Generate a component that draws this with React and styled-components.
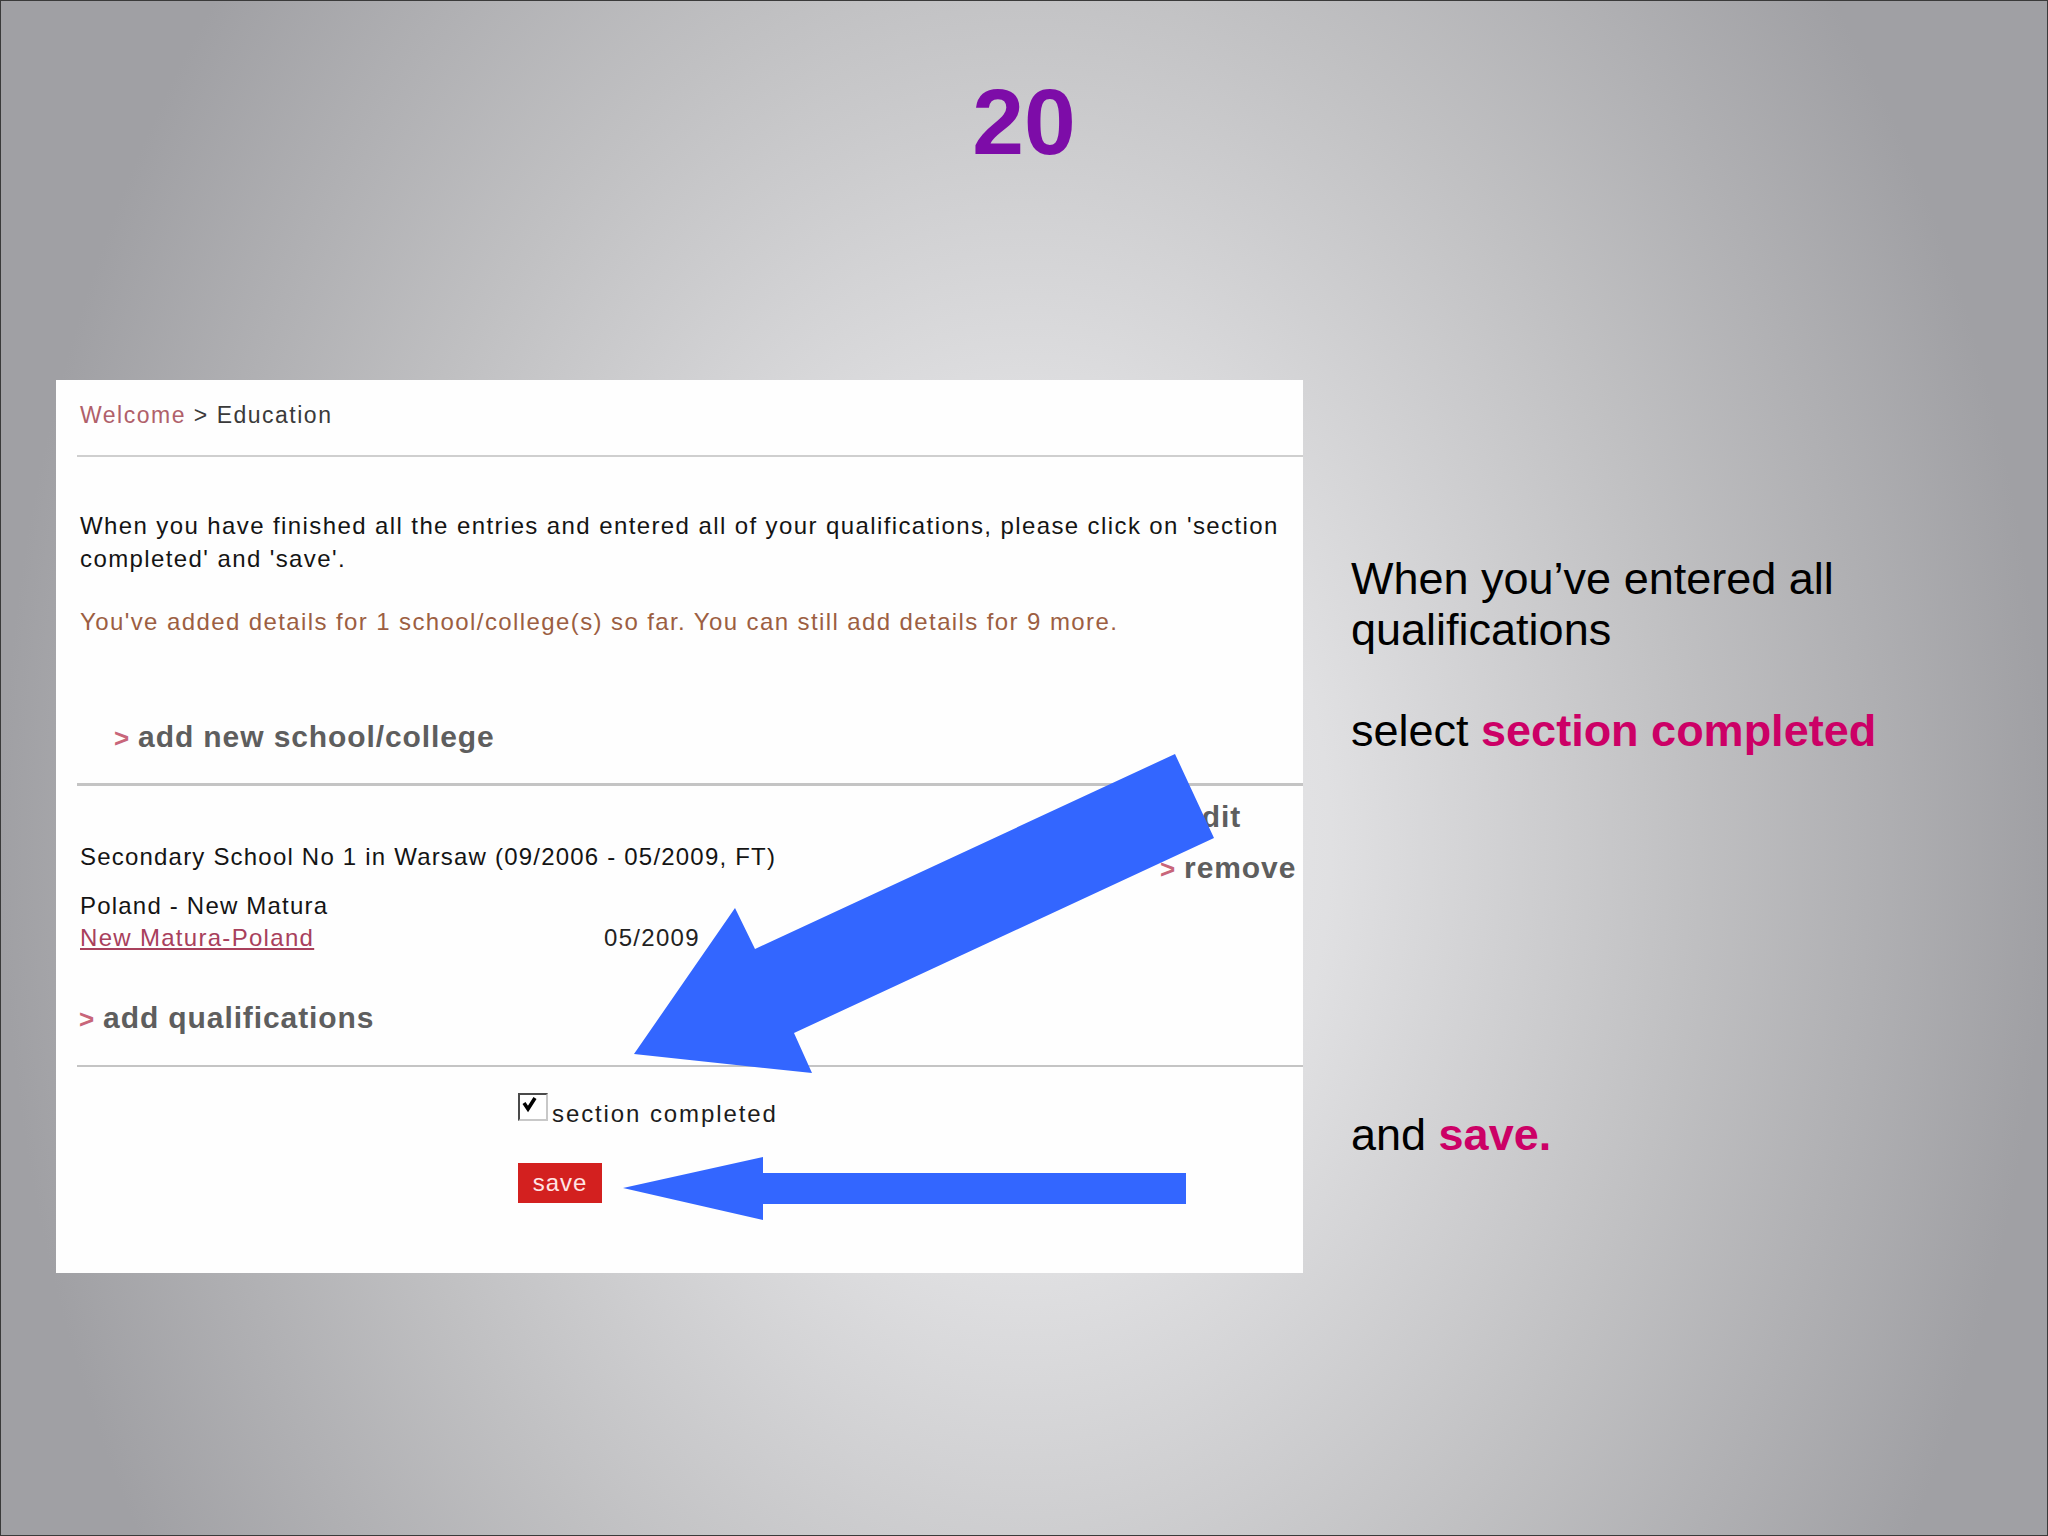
import React from 'react';
import styled, { createGlobalStyle } from 'styled-components';

const Global = createGlobalStyle`
  body {
    margin: 0;
    font-family: "Liberation Sans", Arial, sans-serif;
  }
`;

const Slide = styled.div`
  position: relative;
  box-sizing: border-box;
  width: 2048px;
  height: 1536px;
  overflow: hidden;
  border: 1px solid #3a3a3a;
  background: radial-gradient(ellipse 50% 90% at 50% 55%, #efeff1 0%, #e0e0e2 30%, #c0c0c2 65%, #a0a0a4 100%);
  background-color: #9c9ca0;
`;

const Title = styled.h1`
  margin: 75px 0 0;
  height: 93px;
  font-size: 93px;
  line-height: 93px;
  font-weight: bold;
  text-align: center;
  color: #7d0ca8;
`;

const Content = styled.div`
  display: flex;
  align-items: flex-start;
  margin-top: 211px;
  padding-left: 55px;
`;

const Panel = styled.div`
  box-sizing: border-box;
  width: 1247px;
  height: 893px;
  padding-left: 21px;
  background: #fefefe;
`;

const Breadcrumb = styled.div`
  box-sizing: border-box;
  height: 77px;
  padding: 22px 0 0 3px;
  line-height: 26px;
  font-size: 23px;
  letter-spacing: 1.5px;
  color: #3a3a3a;
  border-bottom: 2px solid #cfcfcf;
`;

const Crumb = styled.span`
  color: #b0606a;
`;

const Section = styled.div`
  padding: ${p => p.$pad || '0'};
  border-bottom: ${p => p.$line ? `${p.$line}px solid #c4c4c4` : 'none'};
`;

const Text = styled.p`
  margin: ${p => p.$mt || 0}px 0 0 3px;
  font-size: 24px;
  line-height: ${p => p.$lh || 33}px;
  letter-spacing: ${p => p.$ls ?? 1.4}px;
  color: ${p => p.$color || '#141414'};
`;

const LinkRow = styled.div`
  margin: ${p => p.$mt || 0}px 0 0 ${p => p.$ml || 0}px;
  font-size: 30px;
  line-height: 36px;
  font-weight: bold;
  letter-spacing: 0.9px;
  color: #5e5e5e;
  white-space: nowrap;
`;

const Chevron = styled.span`
  color: #c8667a;
  margin-right: 8px;
  font-size: 26px;
`;

const SchoolRow = styled.div`
  display: flex;
  align-items: flex-start;
`;

const Details = styled.div`
  flex: 1;
  padding-top: 56px;
`;

const QualRow = styled.div`
  display: grid;
  grid-template-columns: 527px auto;
  margin-top: 2px;
`;

const Cell = styled.span`
  font-size: 24px;
  line-height: 30px;
  letter-spacing: 1.3px;
  color: ${p => p.$link ? '#a8405c' : '#222'};
  text-decoration: ${p => p.$link ? 'underline' : 'none'};
  padding-left: ${p => p.$link ? 3 : 0}px;
`;

const Actions = styled.div`
  display: flex;
  flex-direction: column;
  gap: 14px;
  width: 143px;
  padding-top: 13px;
`;

const Completion = styled.div`
  padding: 26px 0 0 441px;
`;

const CheckRow = styled.label`
  display: flex;
  align-items: flex-start;
  gap: 4px;
`;

const CheckBox = styled.span`
  box-sizing: border-box;
  display: inline-flex;
  width: 30px;
  height: 28px;
  border: 2px solid;
  border-color: #4a4a4a #c8c8c8 #c8c8c8 #4a4a4a;
  background: #fff;
`;

const CheckLabel = styled.span`
  margin-top: 6px;
  font-size: 24px;
  line-height: 30px;
  letter-spacing: 1.9px;
  color: #1c1c1c;
`;

const SaveButton = styled.button`
  display: block;
  margin-top: 34px;
  width: 84px;
  height: 40px;
  padding: 0;
  border: none;
  background: #d3201f;
  color: #ffe4e4;
  font-family: "Liberation Sans", Arial, sans-serif;
  font-size: 24px;
  letter-spacing: 1px;
`;

const Side = styled.div`
  margin-left: 48px;
  padding-top: 173px;
  font-size: 45px;
  line-height: 51px;
  color: #000;
`;

const SideLine = styled.p`
  margin: ${p => p.$mt || 0}px 0 0;
`;

const Accent = styled.b`
  color: #cc0066;
`;

const Overlay = styled.svg`
  position: absolute;
  left: 0;
  top: 0;
  pointer-events: none;
`;

export default function App() {
  return (
    <Slide>
      <Global />
      <Title>20</Title>
      <Content>
        <Panel>
          <Breadcrumb>
            <Crumb>Welcome</Crumb> &gt; Education
          </Breadcrumb>

          <Section $line={3} $pad="0 0 27px">
            <Text $mt={52}>
              When you have finished all the entries and entered all of your qualifications, please click on 'section
              <br />
              completed' and 'save'.
            </Text>
            <Text $mt={30} $color="#9c5e42">
              You've added details for 1 school/college(s) so far. You can still add details for 9 more.
            </Text>
            <LinkRow $mt={81} $ml={37}>
              <Chevron>&gt;</Chevron>add new school/college
            </LinkRow>
          </Section>

          <Section $line={2} $pad="0 0 28px">
            <SchoolRow>
              <Details>
                <Text $lh={30} $ls={1.2}>Secondary School No 1 in Warsaw (09/2006 - 05/2009, FT)</Text>
                <Text $lh={30} $ls={1.2} $mt={19}>Poland - New Matura</Text>
                <QualRow>
                  <Cell $link>New Matura-Poland</Cell>
                  <Cell>05/2009</Cell>
                </QualRow>
                <LinkRow $mt={47} $ml={2}>
                  <Chevron>&gt;</Chevron>add qualifications
                </LinkRow>
              </Details>
              <Actions>
                <LinkRow>
                  <Chevron>&gt;</Chevron>edit
                </LinkRow>
                <LinkRow>
                  <Chevron>&gt;</Chevron>remove
                </LinkRow>
              </Actions>
            </SchoolRow>
          </Section>

          <Completion>
            <CheckRow>
              <CheckBox>
                <svg width="26" height="24" viewBox="0 0 26 24">
                  <path d="M4 8 L8 14 L15 3" fill="none" stroke="#000" strokeWidth="3.6" />
                </svg>
              </CheckBox>
              <CheckLabel>section completed</CheckLabel>
            </CheckRow>
            <SaveButton>save</SaveButton>
          </Completion>
        </Panel>

        <Side>
          <SideLine>
            When you’ve entered all
            <br />
            qualifications
          </SideLine>
          <SideLine $mt={50}>
            select <Accent>section completed</Accent>
          </SideLine>
          <SideLine $mt={353}>
            and <Accent>save.</Accent>
          </SideLine>
        </Side>
      </Content>

      <Overlay width="2048" height="1536" viewBox="0 0 2048 1536">
        <polygon
          fill="#3366ff"
          points="1174,753 1213,837 793,1032 811,1072 633,1053 734,907 754,948"
        />
        <polygon
          fill="#3366ff"
          points="622,1187 762,1156 762,1172 1185,1172 1185,1203 762,1203 762,1219"
        />
      </Overlay>
    </Slide>
  );
}
